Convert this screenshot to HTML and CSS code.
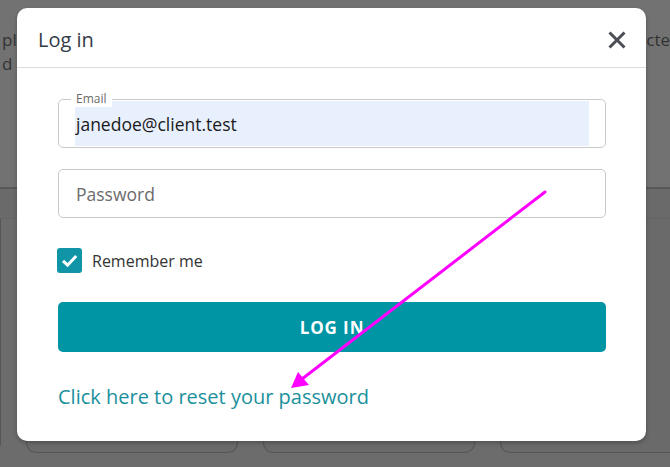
FILE: index.html
```html
<!DOCTYPE html>
<html lang="en">
<head>
<meta charset="utf-8">
<title>Log in</title>
<link rel="stylesheet" href="styles.css">
</head>
<body>
<div class="page">
  <div class="page-top">
    <div class="bg-text bg-left"><span>pl</span><span>d</span></div>
    <div class="bg-text bg-right"><span>ecte</span></div>
  </div>
  <div class="page-band"></div>
  <div class="cards-wrap">
    <div class="cards">
      <div class="card"></div>
      <div class="card"></div>
      <div class="card"></div>
      <div class="card"></div>
    </div>
  </div>
</div>

<div class="modal">
  <div class="modal-header">
    <h1 class="modal-title">Log in</h1>
    <button class="close" aria-label="Close">
      <svg width="20" height="20" viewBox="0 0 20 20"><path d="M2.5 2.5 L17.5 17.5 M17.5 2.5 L2.5 17.5" stroke="#4b4f55" stroke-width="3" stroke-linecap="butt"/></svg>
    </button>
  </div>
  <div class="modal-body">
    <div class="field field-filled">
      <span class="legend">Email</span>
      <div class="autofill">janedoe@client.test</div>
    </div>
    <div class="field">
      <span class="placeholder">Password</span>
    </div>
    <label class="remember">
      <span class="checkbox">
        <svg width="25" height="25" viewBox="0 0 25 25"><path d="M6 12.8 L10.6 17.2 L19.2 8" fill="none" stroke="#fff" stroke-width="3"/></svg>
      </span>
      <span class="remember-text">Remember me</span>
    </label>
    <button class="login-btn">LOG IN</button>
    <a class="reset-link">Click here to reset your password</a>
  </div>
</div>

<svg class="arrow" width="670" height="467" viewBox="0 0 670 467">
  <line x1="545" y1="192" x2="302" y2="379" stroke="#ff00ff" stroke-width="3" stroke-linecap="round"/>
  <polygon points="291,388 298,372 309,385" fill="#ff00ff"/>
</svg>
</body>
</html>
```

FILE: styles.css
```css
* { box-sizing: border-box; }
html, body { margin: 0; padding: 0; }
body {
  width: 670px;
  height: 467px;
  overflow: hidden;
  background: #6c6c6c;
  font-family: "Open Sans", "Liberation Sans", sans-serif;
  position: relative;
}
.page {
  display: flex;
  flex-direction: column;
  height: 467px;
  overflow: hidden;
}
.page-top {
  height: 189px;
  background: #727272;
  border-bottom: 2px solid #585858;
  display: flex;
  justify-content: space-between;
  padding-top: 28px;
}
.bg-text {
  display: flex;
  flex-direction: column;
  font-size: 17px;
  line-height: 24px;
  color: #333;
}
.bg-left { margin-left: 2px; }
.bg-right { margin-right: 0; }
.page-band {
  height: 30px;
  background: #6a6a6a;
  border-bottom: 1px solid #646464;
}
.cards-wrap {
  overflow: hidden;
  height: 235px;
}
.cards {
  display: flex;
  gap: 25px;
  margin-left: -211px;
  height: 235px;
}
.card {
  width: 212px;
  flex-shrink: 0;
  height: 234px;
  border: 1px solid #555;
  border-top: none;
  border-radius: 0 0 10px 10px;
  background: #6a6a6a;
}

.modal {
  position: absolute;
  left: 17px;
  top: 8px;
  width: 629px;
  height: 433px;
  background: #fff;
  border-radius: 10px;
  box-shadow: 0 2px 4px rgba(0,0,0,0.25);
}
.modal-header {
  height: 60px;
  border-bottom: 1px solid #dcdcdc;
  display: flex;
  align-items: center;
  justify-content: space-between;
  padding: 4px 19px 0 21px;
}
.modal-title {
  margin: 0;
  font-size: 20px;
  font-weight: 400;
  color: #333c48;
}
.close {
  border: none;
  background: none;
  padding: 0;
  width: 20px;
  height: 20px;
  display: flex;
}
.modal-body {
  padding: 31px 40px 0 41px;
  display: flex;
  flex-direction: column;
}
.field {
  position: relative;
  height: 49px;
  border: 1px solid #c9c9c9;
  border-radius: 5px;
  display: flex;
  align-items: center;
  padding: 0 17px;
}
.field-filled {
  padding: 1px 16px;
  align-items: stretch;
}
.legend {
  position: absolute;
  left: 12px;
  top: -9px;
  padding: 0 5px;
  background: #fff;
  font-size: 12px;
  line-height: 16px;
  color: #6a6a6a;
}
.autofill {
  flex: 1;
  background: #e8f0fe;
  font-size: 17.5px;
  color: #1a1a1a;
  display: flex;
  align-items: center;
  padding-left: 1px;
  padding-top: 1px;
}
.field + .field { margin-top: 21px; }
.placeholder {
  font-size: 17.5px;
  color: #6b6b6b;
}
.remember {
  display: flex;
  align-items: center;
  gap: 10px;
  margin-top: 30px;
  margin-left: -1px;
}
.checkbox {
  width: 25px;
  height: 25px;
  border-radius: 3px;
  background: #0f95a6;
  display: flex;
}
.remember-text {
  font-size: 16px;
  color: #333;
}
.login-btn {
  margin-top: 29px;
  height: 50px;
  border: none;
  border-radius: 5px;
  background: #0095a4;
  color: #fff;
  font-family: inherit;
  font-size: 17px;
  font-weight: 700;
  letter-spacing: 0.9px;
}
.reset-link {
  margin-top: 31px;
  font-size: 20px;
  color: #1a909c;
  text-decoration: none;
  cursor: pointer;
}
.arrow {
  position: absolute;
  left: 0;
  top: 0;
  pointer-events: none;
}
```
